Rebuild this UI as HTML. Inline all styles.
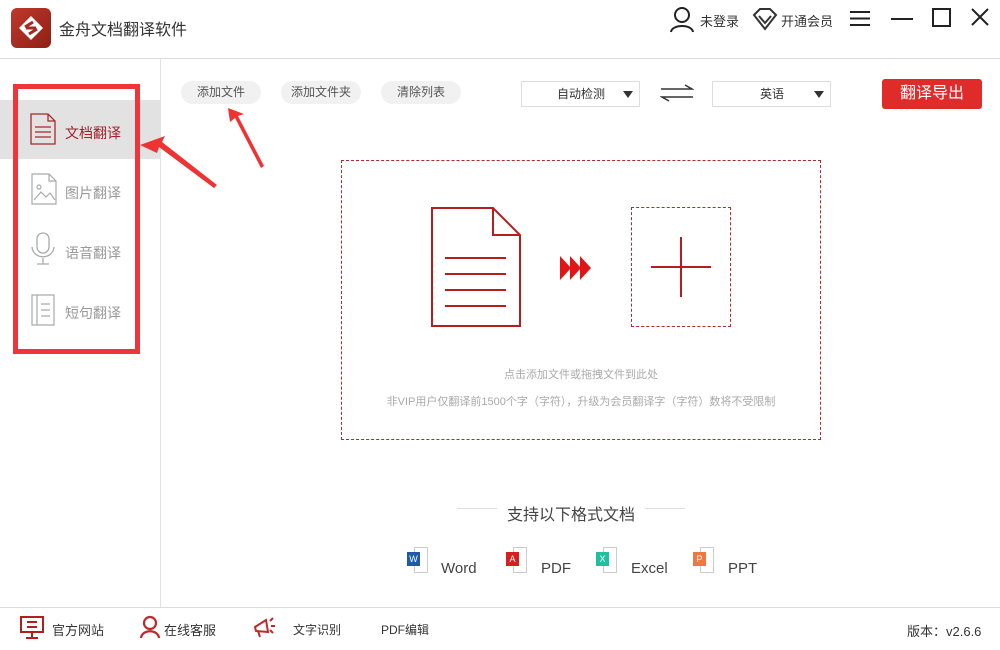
<!DOCTYPE html>
<html><head><meta charset="utf-8"><style>
*{margin:0;padding:0;box-sizing:border-box}
body{width:1000px;height:650px;background:#fff;font-family:"Liberation Sans","Noto Sans CJK SC",sans-serif;position:relative;overflow:hidden;color:#333}
.a{position:absolute}
.t{font-size:13px;white-space:nowrap}
.pill{position:absolute;top:81px;height:23px;border-radius:12px;background:#f1f1f1;font-size:12px;color:#555;text-align:center;line-height:23px}
.sel{position:absolute;top:81px;height:26px;border:1px solid #ddd;font-size:12px;color:#333;line-height:24px}
.sel:after{content:"";position:absolute;right:6px;top:9px;border-left:5px solid transparent;border-right:5px solid transparent;border-top:7px solid #333}
.side{position:absolute;left:65px;font-size:14px;color:#999}
</style></head><body>
<div class="a" style="left:11px;top:8px;width:40px;height:40px;border-radius:6px;background:linear-gradient(135deg,#c0392b,#8e1f16)"></div>
<svg class="a" style="left:11px;top:8px" width="40" height="40"><path d="M20 8 L32 20 L20 32 L8 20Z" fill="#fff"/><path d="M14 19 L22 14 M18 26 L26 21 M15 20 L25 20" stroke="#a52a1f" stroke-width="3"/></svg>
<div class="a" style="left:59px;top:16px;font-size:16px;color:#333">金舟文档翻译软件</div>
<svg class="a" style="left:668px;top:5px" width="28" height="28" fill="none" stroke="#222" stroke-width="2"><circle cx="14" cy="10" r="7"/><path d="M3 27 C4 19 24 19 25 27"/></svg>
<div class="a t" style="left:700px;top:11px">未登录</div>
<svg class="a" style="left:752px;top:7px" width="26" height="24" fill="none" stroke="#333" stroke-width="2"><path d="M2 8 L8 2 H18 L24 8 L13 22Z M7 9 L13 16 L19 9"/></svg>
<div class="a t" style="left:781px;top:11px">开通会员</div>
<svg class="a" style="left:850px;top:10px" width="20" height="17" stroke="#222" stroke-width="2"><path d="M0 2H20M0 8.5H20M0 15H20"/></svg>
<div class="a" style="left:891px;top:18px;width:22px;height:2px;background:#222"></div>
<div class="a" style="left:932px;top:8px;width:19px;height:19px;border:2px solid #222"></div>
<svg class="a" style="left:971px;top:8px" width="18" height="18" stroke="#222" stroke-width="2"><path d="M1 1L17 17M17 1L1 17"/></svg>
<div class="a" style="left:0;top:58px;width:1000px;height:1px;background:#ddd"></div>
<div class="a" style="left:160px;top:59px;width:1px;height:548px;background:#e2e2e2"></div>
<div class="a" style="left:0;top:100px;width:160px;height:59px;background:#e2e2e2"></div>
<svg class="a" style="left:30px;top:113px" width="26" height="32" fill="none" stroke="#a52a2a" stroke-width="1.3"><path d="M1 1H18L25 8V31H1Z M18 1V8H25 M5 14H21M5 19H21M5 24H21"/></svg>
<div class="side" style="top:123px;color:#a0202a">文档翻译</div>
<svg class="a" style="left:31px;top:173px" width="26" height="32" fill="none" stroke="#aaa" stroke-width="1.2"><path d="M1 1H18L25 8V31H1Z M18 1V8H25 M3 27 L10 19 L15 24 L19 20 L24 27"/><circle cx="8" cy="14" r="2"/></svg>
<div class="side" style="top:183px">图片翻译</div>
<svg class="a" style="left:30px;top:232px" width="26" height="34" fill="none" stroke="#aaa" stroke-width="1.3"><rect x="7" y="1" width="12" height="20" rx="6"/><path d="M2 15 C3 28 23 28 24 15 M13 26V32 M7 32H19"/></svg>
<div class="side" style="top:243px">语音翻译</div>
<svg class="a" style="left:31px;top:294px" width="24" height="32" fill="none" stroke="#aaa" stroke-width="1.2"><path d="M1 1H23V31H1Z M6 1V31 M10 10H19M10 16H19M10 22H19"/></svg>
<div class="side" style="top:303px">短句翻译</div>
<div class="a" style="left:13px;top:84px;width:127px;height:270px;border:5px solid #f0353a"></div>
<svg class="a" style="left:135px;top:100px" width="140" height="100"><path d="M5 45 L30 36 L27 42 L82 85 L79 88 L24 47 L22 53Z" fill="#ee3333"/></svg>
<svg class="a" style="left:222px;top:100px" width="50" height="75"><path d="M6 8 L22 14 L16 16 L42 66 L39 68 L13 18 L8 22Z" fill="#ee3333"/></svg>
<div class="pill" style="left:181px;width:80px">添加文件</div>
<div class="pill" style="left:281px;width:80px">添加文件夹</div>
<div class="pill" style="left:381px;width:80px">清除列表</div>
<div class="sel" style="left:521px;width:119px;padding-left:35px">自动检测</div>
<svg class="a" style="left:660px;top:84px" width="34" height="18" stroke="#333" stroke-width="1.5" fill="none"><path d="M1 5H32L25 1 M33 13H2L9 17"/></svg>
<div class="sel" style="left:712px;width:119px;padding-left:47px">英语</div>
<div class="a" style="left:882px;top:79px;width:100px;height:30px;background:#e02b2b;border-radius:3px;color:#fff;font-size:16px;text-align:center;line-height:30px">翻译导出</div>
<div class="a" style="left:341px;top:160px;width:480px;height:280px;border:1px dashed #b22a2a"></div>
<svg class="a" style="left:430px;top:206px" width="92" height="122" fill="none" stroke="#b51e1e" stroke-width="2"><path d="M2 2H63L90 29V120H2Z M63 2V29H90 M15 52H76M15 68H76M15 84H76M15 100H76"/></svg>
<svg class="a" style="left:560px;top:256px" width="32" height="24" fill="#e01515"><path d="M0 0L11 12L0 24Z M10 0L21 12L10 24Z M20 0L31 12L20 24Z"/></svg>
<div class="a" style="left:631px;top:207px;width:100px;height:120px;border:1px dashed #b22a2a"></div>
<div class="a" style="left:651px;top:266px;width:60px;height:2px;background:#b51e1e"></div>
<div class="a" style="left:680px;top:237px;width:2px;height:60px;background:#b51e1e"></div>
<div class="a" style="left:341px;top:366px;width:480px;text-align:center;font-size:11px;color:#aaa">点击添加文件或拖拽文件到此处</div>
<div class="a" style="left:341px;top:393px;width:480px;text-align:center;font-size:11px;color:#aaa">非VIP用户仅翻译前1500个字（字符），升级为会员翻译字（字符）数将不受限制</div>
<div class="a" style="left:457px;top:508px;width:40px;height:1px;background:#ddd"></div>
<div class="a" style="left:645px;top:508px;width:40px;height:1px;background:#ddd"></div>
<div class="a" style="left:507px;top:501px;font-size:16px;color:#444">支持以下格式文档</div>
<div class="a" style="left:414px;top:547px;width:14px;height:26px;border:1px solid #ccc"></div><div class="a" style="left:407px;top:552px;width:13px;height:14px;background:#1e5aa8;color:#fff;font-size:9px;text-align:center;line-height:14px">W</div>
<div class="a t" style="left:441px;top:560px;font-size:15px;color:#444">Word</div>
<div class="a" style="left:513px;top:547px;width:14px;height:26px;border:1px solid #ccc"></div><div class="a" style="left:506px;top:552px;width:13px;height:14px;background:#d81e1e;color:#fff;font-size:9px;text-align:center;line-height:14px">A</div>
<div class="a t" style="left:541px;top:560px;font-size:15px;color:#444">PDF</div>
<div class="a" style="left:603px;top:547px;width:14px;height:26px;border:1px solid #ccc"></div><div class="a" style="left:596px;top:552px;width:13px;height:14px;background:#1fbf9f;color:#fff;font-size:9px;text-align:center;line-height:14px">X</div>
<div class="a t" style="left:631px;top:560px;font-size:15px;color:#444">Excel</div>
<div class="a" style="left:700px;top:547px;width:14px;height:26px;border:1px solid #ccc"></div><div class="a" style="left:693px;top:552px;width:13px;height:14px;background:#f07840;color:#fff;font-size:9px;text-align:center;line-height:14px">P</div>
<div class="a t" style="left:728px;top:560px;font-size:15px;color:#444">PPT</div>
<div class="a" style="left:0;top:607px;width:1000px;height:1px;background:#ddd"></div>
<svg class="a" style="left:20px;top:616px" width="26" height="24" fill="none" stroke="#b51e1e" stroke-width="2"><rect x="1" y="1" width="22" height="15"/><path d="M7 6H17M7 11H17M12 16V21M6 22H18"/></svg>
<div class="a t" style="left:52px;top:620px">官方网站</div>
<svg class="a" style="left:139px;top:615px" width="22" height="24" fill="none" stroke="#c0282a" stroke-width="2.2"><circle cx="11" cy="8" r="6"/><path d="M2 23 C3 14 19 14 20 23"/></svg>
<div class="a t" style="left:164px;top:620px">在线客服</div>
<svg class="a" style="left:252px;top:615px" width="24" height="24" fill="none" stroke="#c0282a" stroke-width="2"><path d="M3 12 L14 5 L16 17 L4 16Z M6 16 L8 22 M18 6 L21 3 M19 11 L23 11 M18 15 L21 18"/></svg>
<div class="a t" style="left:293px;top:621px;font-size:12px">文字识别</div>
<div class="a t" style="left:381px;top:621px;font-size:12px">PDF编辑</div>
<div class="a t" style="left:907px;top:621px">版本：v2.6.6</div>
</body></html>
